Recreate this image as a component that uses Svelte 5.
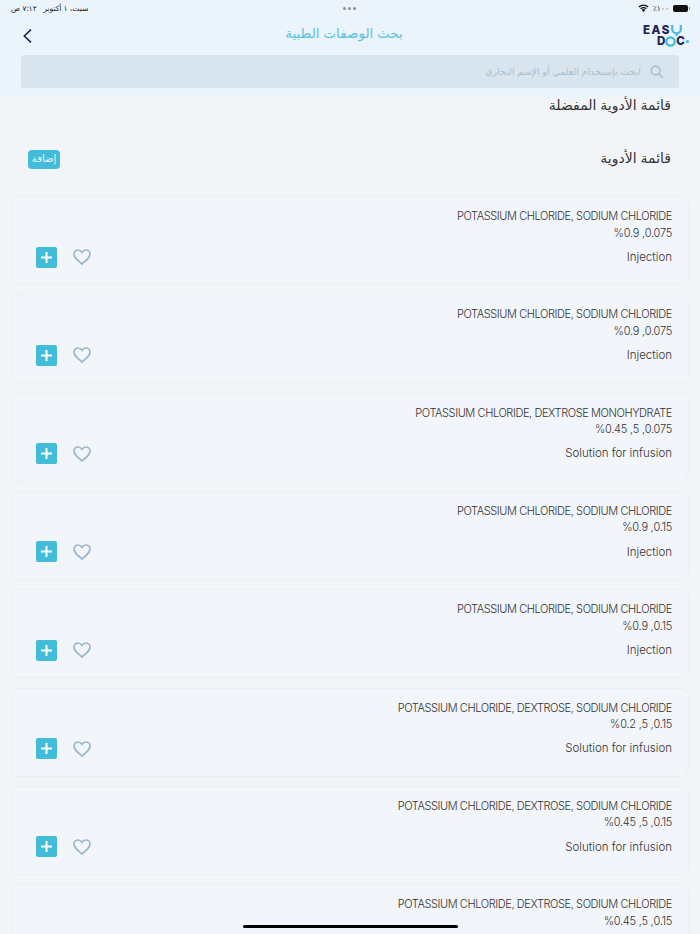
<script>
  const drugs = [
    { name: "POTASSIUM CHLORIDE, SODIUM CHLORIDE", dose: "0.075, %0.9", form: "Injection" },
    { name: "POTASSIUM CHLORIDE, SODIUM CHLORIDE", dose: "0.075, %0.9", form: "Injection" },
    { name: "POTASSIUM CHLORIDE, DEXTROSE MONOHYDRATE", dose: "0.075, 5, %0.45", form: "Solution for infusion" },
    { name: "POTASSIUM CHLORIDE, SODIUM CHLORIDE", dose: "0.15, %0.9", form: "Injection" },
    { name: "POTASSIUM CHLORIDE, SODIUM CHLORIDE", dose: "0.15, %0.9", form: "Injection" },
    { name: "POTASSIUM CHLORIDE, DEXTROSE, SODIUM CHLORIDE", dose: "0.15, 5, %0.2", form: "Solution for infusion" },
    { name: "POTASSIUM CHLORIDE, DEXTROSE, SODIUM CHLORIDE", dose: "0.15, 5, %0.45", form: "Solution for infusion" },
    { name: "POTASSIUM CHLORIDE, DEXTROSE, SODIUM CHLORIDE", dose: "0.15, 5, %0.45", form: "Solution for infusion" }
  ];
</script>

<div class="page" dir="rtl">
  <header class="top">
    <div class="status" dir="ltr">
      <span class="clock" dir="rtl">سبت، ١ أكتوبر&nbsp;&nbsp; ٧:١٢ ص</span>
      <span class="dots"><i></i><i></i><i></i></span>
      <span class="sys">
        <svg class="wifi" width="11" height="8" viewBox="0 0 11 8">
          <path d="M5.5 8 L3.6 5.9 A2.8 2.8 0 0 1 7.4 5.9 Z" fill="#111" />
          <path d="M2.6 4.9 A4.2 4.2 0 0 1 8.4 4.9" fill="none" stroke="#111" stroke-width="1.3" />
          <path d="M0.9 3 A6.6 6.6 0 0 1 10.1 3" fill="none" stroke="#111" stroke-width="1.3" />
        </svg>
        <span class="pct">٪١٠٠</span>
        <span class="batt"><b></b></span>
      </span>
    </div>

    <div class="nav">
      <div class="logo" dir="ltr">
        <div class="l1">EAS<svg width="11" height="11" viewBox="0 0 11 11"><path d="M1.2 0 V4 A4.3 4.3 0 0 0 9.8 4 V0 M5.5 8 V11" fill="none" stroke="#42bcd9" stroke-width="2.2" /></svg></div>
        <div class="l2">D<svg width="11" height="11" viewBox="0 0 11 11"><circle cx="5.5" cy="5.5" r="4.2" fill="none" stroke="#42bcd9" stroke-width="2.3" /></svg>C<i></i></div>
      </div>
      <h1>بحث الوصفات الطبية</h1>
      <svg class="back" width="9" height="14" viewBox="0 0 9 14">
        <path d="M8 0.7 L1.3 7 L8 13.3" fill="none" stroke="#1d2250" stroke-width="1.6" />
      </svg>
    </div>

    <div class="search">
      <svg width="14" height="14" viewBox="0 0 14 14">
        <circle cx="5.6" cy="5.6" r="4.4" fill="none" stroke="#a3bccd" stroke-width="1.4" />
        <path d="M8.9 8.9 L13 13" stroke="#a3bccd" stroke-width="1.6" />
      </svg>
      <span>ابحث بإستخدام العلمي أو الإسم التجاري</span>
    </div>
  </header>

  <h2 class="fav">قائمة الأدوية المفضلة</h2>

  <div class="list-head">
    <h2>قائمة الأدوية</h2>
    <button class="add-btn">إضافة</button>
  </div>

  <div class="list">
    {#each drugs as d}
      <article class="card">
        <div class="name">{d.name}</div>
        <div class="dose">{d.dose}</div>
        <div class="row">
          <span class="form" dir="ltr">{d.form}</span>
          <div class="actions">
            <svg class="heart" width="18" height="16" viewBox="0 0 18 16">
              <path d="M9 15 C4 11 1 8.5 1 5 C1 2.6 2.9 1 5 1 C6.7 1 8.1 1.9 9 3.4 C9.9 1.9 11.3 1 13 1 C15.1 1 17 2.6 17 5 C17 8.5 14 11 9 15 Z" fill="none" stroke="#9ab7cb" stroke-width="1.7" />
            </svg>
            <span class="plus"><svg width="11" height="11" viewBox="0 0 11 11"><path d="M5.5 0 V11 M0 5.5 H11" stroke="#fff" stroke-width="2" /></svg></span>
          </div>
        </div>
      </article>
    {/each}
  </div>

  <div class="home"></div>
</div>

<style>
  :global(body) {
    margin: 0;
    background: #f1f5f9;
  }

  .page {
    position: relative;
    width: 700px;
    height: 934px;
    overflow: hidden;
    background: #f1f5f8;
    font-family: "Inter", "Noto Sans", "DejaVu Sans", sans-serif;
    color: #333;
  }

  .top {
    height: 98px;
    background: #ebf3fb;
    display: flex;
    flex-direction: column;
    box-sizing: border-box;
  }

  .status {
    height: 16px;
    padding: 0 11px;
    display: flex;
    align-items: center;
    justify-content: space-between;
    position: relative;
    font-size: 7.6px;
    color: #222;
  }

  .dots {
    position: absolute;
    left: 343px;
    top: 7px;
    display: flex;
    gap: 2px;
  }

  .dots i {
    width: 3px;
    height: 3px;
    border-radius: 50%;
    background: #8a9097;
  }

  .sys {
    display: flex;
    align-items: center;
    gap: 4px;
  }

  .batt {
    width: 15px;
    height: 7px;
    border-radius: 2px;
    background: #111;
    display: block;
    position: relative;
    margin-right: 1px;
  }

  .batt b {
    position: absolute;
    right: -2px;
    top: 2px;
    width: 1px;
    height: 3px;
    background: #888;
  }

  .nav {
    height: 39px;
    display: flex;
    align-items: center;
    justify-content: space-between;
    position: relative;
    padding: 0 11px 0 23px;
  }

  .nav h1 {
    position: absolute;
    left: 0;
    right: 12px;
    top: 9px;
    margin: 0;
    text-align: center;
    font-size: 13.5px;
    font-weight: 400;
    color: #5cc3de;
  }

  .logo {
    width: 46px;
    font-weight: 800;
    font-size: 11.5px;
    line-height: 11px;
    letter-spacing: 1.6px;
    color: #1d2250;
  }

  .l1, .l2 {
    display: flex;
    align-items: flex-start;
  }

  .l2 {
    padding-left: 14px;
    letter-spacing: 0;
  }

  .l2 i {
    width: 3px;
    height: 3px;
    margin: 4px 0 0 1px;
    border-radius: 50%;
    background: #42bcd9;
  }

  .search {
    height: 33px;
    margin: 0 21px;
    background: #d9e5ee;
    border-radius: 3px;
    display: flex;
    align-items: center;
    gap: 9px;
    padding: 0 15px;
    font-size: 9.5px;
    color: #a9bfcf;
  }

  h2 {
    margin: 0;
    font-size: 14px;
    font-weight: 400;
    color: #333;
  }

  .fav {
    padding: 0 29px;
    height: 14px;
    line-height: 14px;
  }

  .list-head {
    height: 84px;
    display: flex;
    align-items: center;
    justify-content: space-between;
    padding: 10px 29px 0 28px;
    box-sizing: border-box;
  }

  .list-head h2 {
    margin-bottom: 3px;
  }

  .add-btn {
    width: 32px;
    height: 19px;
    padding: 0 0 3px;
    border: none;
    border-radius: 4px;
    background: #42bcd9;
    color: #eaf7fb;
    font: inherit;
    font-size: 10px;
  }

  .list {
    display: flex;
    flex-direction: column;
    gap: 9.33px;
    padding: 0 11px;
  }

  .card {
    height: 89px;
    flex: none;
    box-sizing: border-box;
    padding: 11px 16px 0 24px;
    background: #f2f5f9;
    border: 1px solid #ebeff3;
    border-radius: 8px;
    font-size: 11px;
    font-weight: 300;
    line-height: 16.5px;
    color: #333;
  }

  .name {
    letter-spacing: -0.4px;
  }

  .dose {
    letter-spacing: -0.25px;
  }

  .row {
    display: flex;
    align-items: center;
    justify-content: space-between;
    margin-top: 5.5px;
  }

  .form {
    font-size: 11.5px;
  }

  .actions {
    display: flex;
    align-items: center;
    gap: 16px;
  }

  .plus {
    width: 21px;
    height: 21px;
    border-radius: 2px;
    background: #42bcd9;
    display: flex;
    align-items: center;
    justify-content: center;
  }

  .home {
    position: absolute;
    left: 243px;
    bottom: 6px;
    width: 215px;
    height: 3px;
    border-radius: 2px;
    background: #000;
  }
</style>
